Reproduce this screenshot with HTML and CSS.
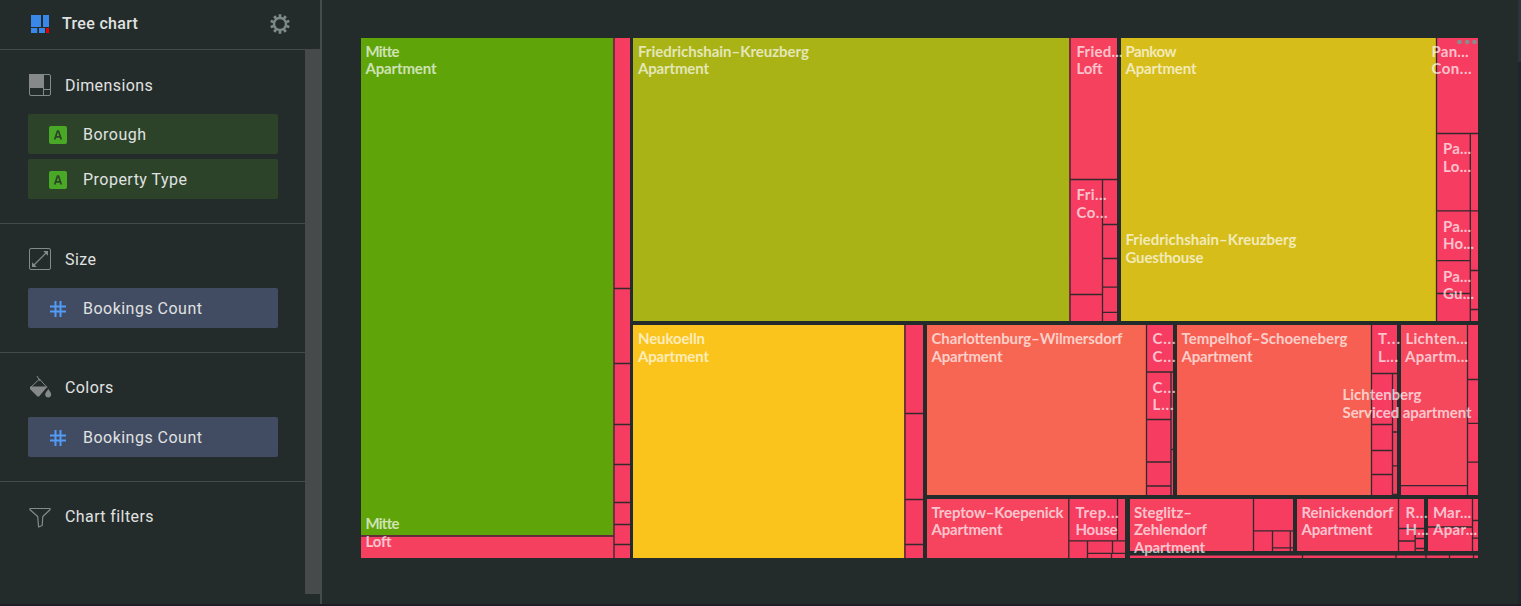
FILE: index.html
```html
<!DOCTYPE html>
<html lang="en">
<head>
<meta charset="utf-8">
<title>Tree chart</title>
<link rel="stylesheet" href="styles.css">
</head>
<body>
<div class="app">
  <aside class="sidebar">
    <header class="head">
      <svg class="logo" viewBox="0 0 18 18"><path fill="#3a87ea" d="M0 0h10v12H0zM12 0h6v12h-6zM0 13h6.300v5H0zM8 13h6v5H8z"/><path fill="#e60000" d="M15 13h3v5h-3z"/></svg>
      <h1 class="title">Tree chart</h1>
      <svg class="gear" viewBox="-10 -10 20 20"><circle r="6" fill="none" stroke="#7c8987" stroke-width="2.400"/><g stroke="#7c8987" stroke-width="2.800"><path id="t" d="M0-6.500V-9.800M0 6.500V9.800"/><use href="#t" transform="rotate(36)"/><use href="#t" transform="rotate(72)"/><use href="#t" transform="rotate(108)"/><use href="#t" transform="rotate(144)"/></g></svg>
    </header>
    <div class="scroll">
      <div class="sections">
        <section class="section">
          <h2 class="heading"><svg class="icon" viewBox="0 0 24 24"><path fill="#85898a" d="M1 1h14v13H1z"/><g fill="none" stroke="#85898a"><rect x="1.500" y="1.500" width="21" height="21" rx="1.500"/><path d="M15.500 1v22M1 14.500h14M15.500 16.500H23"/></g></svg>Dimensions</h2>
          <div class="field dim"><svg class="type" viewBox="0 0 18 18"><rect width="18" height="18" rx="2" fill="#4aa827"/><path d="M5.700 13.500 8.500 5h1l2.800 8.500M6.700 10.800h4.600" fill="none" stroke="#2c432a" stroke-width="1.700"/></svg>Borough</div>
          <div class="field dim"><svg class="type" viewBox="0 0 18 18"><rect width="18" height="18" rx="2" fill="#4aa827"/><path d="M5.700 13.500 8.500 5h1l2.800 8.500M6.700 10.800h4.600" fill="none" stroke="#2c432a" stroke-width="1.700"/></svg>Property Type</div>
        </section>
        <section class="section">
          <h2 class="heading"><svg class="icon" viewBox="0 0 24 24"><rect x="1.500" y="1.500" width="21" height="21" rx="1.500" fill="none" stroke="#85898a"/><path d="M6 18 18 6" stroke="#85898a" stroke-width="1.200"/><path fill="#85898a" d="M20 4v4.800L15.200 4zM4 20v-4.800L8.800 20z"/></svg>Size</h2>
          <div class="field measure"><svg class="type" viewBox="0 0 18 18"><path d="M6.500 1v16M11.500 1v16M1 6.500h16M1 11.500h16" stroke="#539bf5" stroke-width="2"/></svg>Bookings Count</div>
        </section>
        <section class="section up">
          <h2 class="heading"><svg class="icon" viewBox="0 0 24 24"><path fill="none" stroke="#85898a" d="m9 1 3 5M11.500 4 2 13M11.500 4 19 12.500"/><path fill="#85898a" d="M2 11.500h17.500L11 21.500H9.500L2 14zM20.300 14c1.600 2.500 2.900 3.800 2.900 5.500 0 3.900-6 3.900-6 0 0-1.700 1.500-3 3.100-5.500z"/></svg>Colors</h2>
          <div class="field measure"><svg class="type" viewBox="0 0 18 18"><path d="M6.500 1v16M11.500 1v16M1 6.500h16M1 11.500h16" stroke="#539bf5" stroke-width="2"/></svg>Bookings Count</div>
        </section>
        <section class="section up last">
          <h2 class="heading"><svg class="icon" viewBox="0 0 24 24"><path fill="none" stroke="#85898a" stroke-width="1.200" stroke-linejoin="round" d="M2 4.500h20v1.200l-7.200 6.800-.6 9-3.600 1.500-.9-10.500L2 5.700z"/></svg>Chart filters</h2>
        </section>
      </div>
      <div class="track"></div>
    </div>
  </aside>
  <main class="stage">
    <svg class="chart" viewBox="360 37 1119 522" role="img" aria-label="Bookings by borough and property type">
      <!-- Mitte -->
      <g>
        <rect class="p" x="361" y="38" width="269" height="520"/>
        <rect fill="#5fa50a" x="361" y="38" width="252" height="497"/>
        <rect fill="#f6405f" x="361" y="537" width="252" height="21"/>
        <path class="l" d="M614 38V558M361 536H614M614 288.500h16M614 363.500h16M614 424.500h16M614 464.500h16M614 502.500h16M614 524.500h16M614 544.500h16"/>
      </g>
      <!-- Friedrichshain-Kreuzberg -->
      <g>
        <rect class="p" x="633" y="38" width="484" height="283"/>
        <rect fill="#a9b315" x="633" y="38" width="436" height="283"/>
        <rect fill="#f6415e" x="1071" y="38" width="46" height="141"/>
        <path class="l" d="M1070 38V321M1070 179.500h47M1102.500 180V321M1070 294.500h32M1103 224.500h14M1103 258.500h14M1103 287.200h14M1103 312.300h14"/>
      </g>
      <!-- Pankow -->
      <g>
        <rect class="p" x="1121" y="38" width="357" height="283"/>
        <rect fill="#d6bd19" x="1121" y="38" width="315" height="283"/>
        <path class="l" d="M1436.500 38V321M1437 133.500h41M1470.300 134V321M1437 210.800h41M1437 260.700h33M1437 293.500h33M1471 270.500h7M1471 309.500h7"/>
      </g>
      <!-- Neukoelln -->
      <g>
        <rect class="p" x="633" y="325" width="290" height="233"/>
        <rect fill="#fac41c" x="633" y="325" width="271" height="233"/>
        <path class="l" d="M905 325V558M905 413.500h18M905 499.500h18M905 544.500h18"/>
      </g>
      <!-- Charlottenburg-Wilmersdorf -->
      <g>
        <rect class="p" x="927" y="325" width="246" height="170"/>
        <rect fill="#f76652" x="927" y="325" width="219" height="170"/>
        <path class="l" d="M1146.500 325V495M1147 372h26M1171 372V495M1147 419.500h24M1147 462h24M1147 486h24M1171 449.500h2"/>
      </g>
      <!-- Tempelhof-Schoeneberg -->
      <g>
        <rect class="p" x="1177" y="325" width="220" height="170"/>
        <rect fill="#f75f52" x="1177" y="325" width="194" height="170"/>
        <path class="l" d="M1371.500 325V495M1372 373.500h25M1392.500 374V495M1372 424.500h20M1372 450.500h20M1372 474.500h20M1393 432h4M1393 465.800h4M1393 494.500h4"/>
      </g>
      <!-- Lichtenberg -->
      <g>
        <rect class="p" x="1401" y="325" width="77" height="170"/>
        <rect fill="#f6485c" x="1401" y="325" width="66" height="160"/>
        <path class="l" d="M1467.500 325V495M1401 485.700h66M1468 379.500h10M1468 423.300h10M1468 462.200h10"/>
      </g>
      <!-- Treptow-Koepenick -->
      <g>
        <rect class="p" x="927" y="499" width="198" height="59"/>
        <rect fill="#f6445e" x="927" y="499" width="141" height="59"/>
        <path class="l" d="M1068.800 499V558M1069 540.800h56M1117.500 499V540M1087.500 541V558M1112.500 541V553M1088 553.300h37M1111.500 554V558"/>
      </g>
      <!-- Steglitz-Zehlendorf -->
      <g>
        <rect class="p" x="1130" y="499" width="163" height="52"/>
        <rect fill="#f6425f" x="1130" y="499" width="123" height="52"/>
        <path class="l" d="M1253.500 499V551M1254 530.800h39M1272.500 531V551M1290.300 531V551M1273 547.800h20"/>
      </g>
      <!-- Reinickendorf -->
      <g>
        <rect class="p" x="1297" y="499" width="127" height="52"/>
        <rect fill="#f6405f" x="1297" y="499" width="101" height="52"/>
        <path class="l" d="M1398.500 499V551M1399 528.500h25M1415.200 529V551M1399 541h16M1416 538.500h8M1416 548.500h8"/>
      </g>
      <!-- Marzahn-Hellersdorf -->
      <g>
        <rect class="p" x="1428" y="499" width="50" height="52"/>
        <path class="l" d="M1428 527h44M1472.500 499V551M1473 520.500h5M1473 538.200h5"/>
      </g>
      <!-- Spandau -->
      <g>
        <rect class="p" x="1130" y="556" width="348" height="2"/>
        <rect class="edge" x="1130" y="555" width="348" height="1"/>
        <path class="l" d="M1302.500 555v3M1396 555v3M1426 555v3M1449.500 555v3M1473.500 555v3"/>
      </g>
      <g class="labels">
        <text x="365.500" y="57" textLength="34">Mitte</text><text x="365.500" y="74" textLength="71">Apartment</text>
        <text x="365.500" y="529" textLength="34">Mitte</text><text x="365.500" y="547" textLength="26">Loft</text>
        <text x="638" y="57" textLength="171">Friedrichshain–Kreuzberg</text><text x="638" y="74" textLength="71">Apartment</text>
        <text x="1076.500" y="57" textLength="46">Fried...</text><text x="1076.500" y="74" textLength="26">Loft</text>
        <text x="1076.500" y="200" textLength="30">Fri...</text><text x="1076.500" y="218" textLength="31">Co...</text>
        <text x="1125.500" y="57" textLength="51">Pankow</text><text x="1125.500" y="74" textLength="71">Apartment</text>
        <text x="1125.500" y="245" textLength="171">Friedrichshain–Kreuzberg</text><text x="1125.500" y="263" textLength="78">Guesthouse</text>
        <text x="1431.500" y="57" textLength="37">Pan...</text><text x="1431.500" y="74" textLength="40">Con...</text>
        <text x="1443" y="154" textLength="28">Pa...</text><text x="1443" y="172" textLength="28">Lo...</text>
        <text x="1443" y="232" textLength="28">Pa...</text><text x="1443" y="249" textLength="31">Ho...</text>
        <text x="1443" y="282" textLength="28">Pa...</text><text x="1443" y="299" textLength="31">Gu...</text>
        <text x="638" y="344" textLength="67">Neukoelln</text><text x="638" y="362" textLength="71">Apartment</text>
        <text x="931.500" y="344" textLength="191">Charlottenburg–Wilmersdorf</text><text x="931.500" y="362" textLength="71">Apartment</text>
        <text x="1152.500" y="344" textLength="23">C...</text><text x="1152.500" y="362" textLength="23">C...</text>
        <text x="1152.500" y="393" textLength="23">C...</text><text x="1152.500" y="410" textLength="21">L...</text>
        <text x="1181.500" y="344" textLength="166">Tempelhof–Schoeneberg</text><text x="1181.500" y="362" textLength="71">Apartment</text>
        <text x="1378" y="344" textLength="22">T...</text><text x="1378" y="362" textLength="20">L...</text>
        <text x="1405.500" y="344" textLength="62">Lichten...</text><text x="1405" y="362" textLength="63">Apartm...</text>
        <text x="1342.500" y="400" textLength="79">Lichtenberg</text><text x="1342.500" y="418" textLength="129">Serviced apartment</text>
        <text x="931.500" y="518" textLength="132">Treptow–Koepenick</text><text x="931.500" y="535" textLength="71">Apartment</text>
        <text x="1075.500" y="518" textLength="43">Trep...</text><text x="1075.500" y="535" textLength="42">House</text>
        <text x="1134" y="518" textLength="58">Steglitz–</text><text x="1134" y="535" textLength="73">Zehlendorf</text><text x="1134" y="553" textLength="71">Apartment</text>
        <text x="1301.500" y="518" textLength="92">Reinickendorf</text><text x="1301.500" y="535" textLength="71">Apartment</text>
        <text x="1405.500" y="518" textLength="22">R...</text><text x="1405.500" y="535" textLength="23">H...</text>
        <text x="1433" y="518" textLength="38">Mar...</text><text x="1433" y="535" textLength="44">Apar...</text>
      </g>
      <g fill="#868f8d"><circle cx="1459.500" cy="42" r="2.300"/><circle cx="1467.200" cy="42" r="2.300"/><circle cx="1474.500" cy="42" r="2.300"/></g>
    </svg>
  </main>
  <div class="rail"><div class="thumb"></div></div>
</div>
</body>
</html>
```
FILE: styles.css
```css
* { box-sizing: border-box; }
body {
  margin: 0;
  height: 606px;
  overflow: hidden;
  background: #1d1d23;
  font-family: Roboto, "Noto Sans", sans-serif;
  color: #e0e2e1;
}
svg { display: block; flex: none; }
.app { display: flex; height: 604px; background: #242c2b; }
.sidebar {
  display: flex;
  flex-direction: column;
  width: 322px;
  border-right: 2px solid #464a4a;
}
.head {
  display: flex;
  align-items: center;
  height: 50px;
  padding: 0 30px 2px 31px;
  border-bottom: 1px solid #464a4a;
}
.logo { width: 18px; height: 18px; }
.gear { width: 20px; height: 20px; margin-left: auto; }
.title {
  margin: 0 0 0 13px;
  font-size: 16px;
  font-weight: 500;
  letter-spacing: .32px;
}
.scroll { display: flex; height: 544px; }
.sections { width: 305px; }
.track { width: 17px; margin-right: -2px; background: #464a4a; }
.section {
  display: flex;
  flex-direction: column;
  padding: 23px 27px 24px 28px;
  border-bottom: 1px solid #464a4a;
}
.up { padding-top: 22px; }
.up .heading { margin-bottom: 18px; }
.last { border-bottom: 0; }
.heading {
  display: flex;
  align-items: center;
  gap: 13px;
  height: 24px;
  margin: 0 0 17px;
  font-size: 16px;
  font-weight: 450;
  letter-spacing: .4px;
}
.icon { width: 24px; height: 24px; }
.field {
  display: flex;
  align-items: center;
  gap: 16px;
  height: 40px;
  padding-left: 21px;
  border-radius: 2px;
  font-size: 16px;
  font-weight: 450;
  letter-spacing: .48px;
}
.field + .field { margin-top: 5px; }
.type { width: 18px; height: 18px; margin-top: 2px; }
.dim { background: #2c432a; }
.measure { background: #414b62; }
.stage { flex: 1; padding: 37px 0 0 38px; }
.chart { width: 1119px; height: 522px; }
.p { fill: #f63c60; }
.l { fill: none; stroke: #33292e; stroke-width: 1.300px; }
.edge { fill: #873444; }
.labels {
  fill: #fff;
  fill-opacity: .7;
  font: 700 15px Lato, "Noto Sans", sans-serif;
}
.rail { width: 3px; background: #22242c; }
.thumb { height: 62px; background: #30333b; }
```
